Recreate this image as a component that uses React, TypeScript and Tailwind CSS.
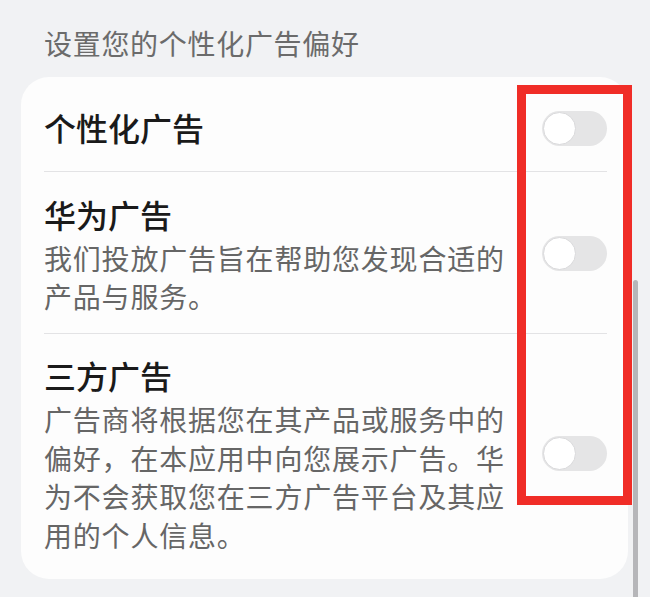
import React from "react";

function Toggle() {
  return (
    <div className="w-[65px] h-[35px] rounded-full bg-[#e5e5e6] flex items-center pl-[1px] shrink-0">
      <div className="w-[33px] h-[33px] rounded-full bg-white border border-[#d9d9db]" />
    </div>
  );
}

export default function App() {
  const font = { fontFamily: '"Noto Sans CJK SC", "Noto Sans", sans-serif' };
  return (
    <div className="relative w-[650px] h-[597px] bg-[#f1f2f4] overflow-hidden" style={font}>
      <div className="pt-[24px] pl-[44px] text-[28px] leading-[38px] tracking-[0.7px] text-[#6b6b6b]">
        设置您的个性化广告偏好
      </div>
      <div className="mt-[15px] ml-[21px] w-[607px] rounded-[28px] bg-[#fdfdfd] py-[8px] pl-[23px] pr-[21px]">
        <div className="h-[86px] flex items-center justify-between">
          <div className="text-[32px] leading-[46px] pb-[3px] font-medium text-[#1a1a1a]">个性化广告</div>
          <Toggle />
        </div>
        <div className="h-px bg-[#e3e3e5]" />
        <div className="flex items-center justify-between pt-[19px] pb-[18px]">
          <div className="w-[472px]">
            <div className="text-[32px] leading-[46px] font-medium text-[#1a1a1a]">华为广告</div>
            <div className="mt-[2px] text-[28px] leading-[38px] tracking-[0.8px] text-[#666666]">
              我们投放广告旨在帮助您发现合适的产品与服务。
            </div>
          </div>
          <Toggle />
        </div>
        <div className="h-px bg-[#e3e3e5]" />
        <div className="flex items-center justify-between pt-[18px] pb-[17px]">
          <div className="w-[472px]">
            <div className="text-[32px] leading-[46px] font-medium text-[#1a1a1a]">三方广告</div>
            <div className="mt-[2px] text-[28px] leading-[38.5px] tracking-[0.8px] text-[#666666]">
              广告商将根据您在其产品或服务中的偏好，在本应用中向您展示广告。华为不会获取您在三方广告平台及其应用的个人信息。
            </div>
          </div>
          <Toggle />
        </div>
      </div>
      <div className="absolute left-[517px] top-[85px] w-[115px] h-[420px] border-[9px] border-[#f02d27]" />
      <div className="absolute left-[633px] top-[280px] w-[5px] h-[330px] rounded-full bg-[#b6b6b9]" />
    </div>
  );
}
